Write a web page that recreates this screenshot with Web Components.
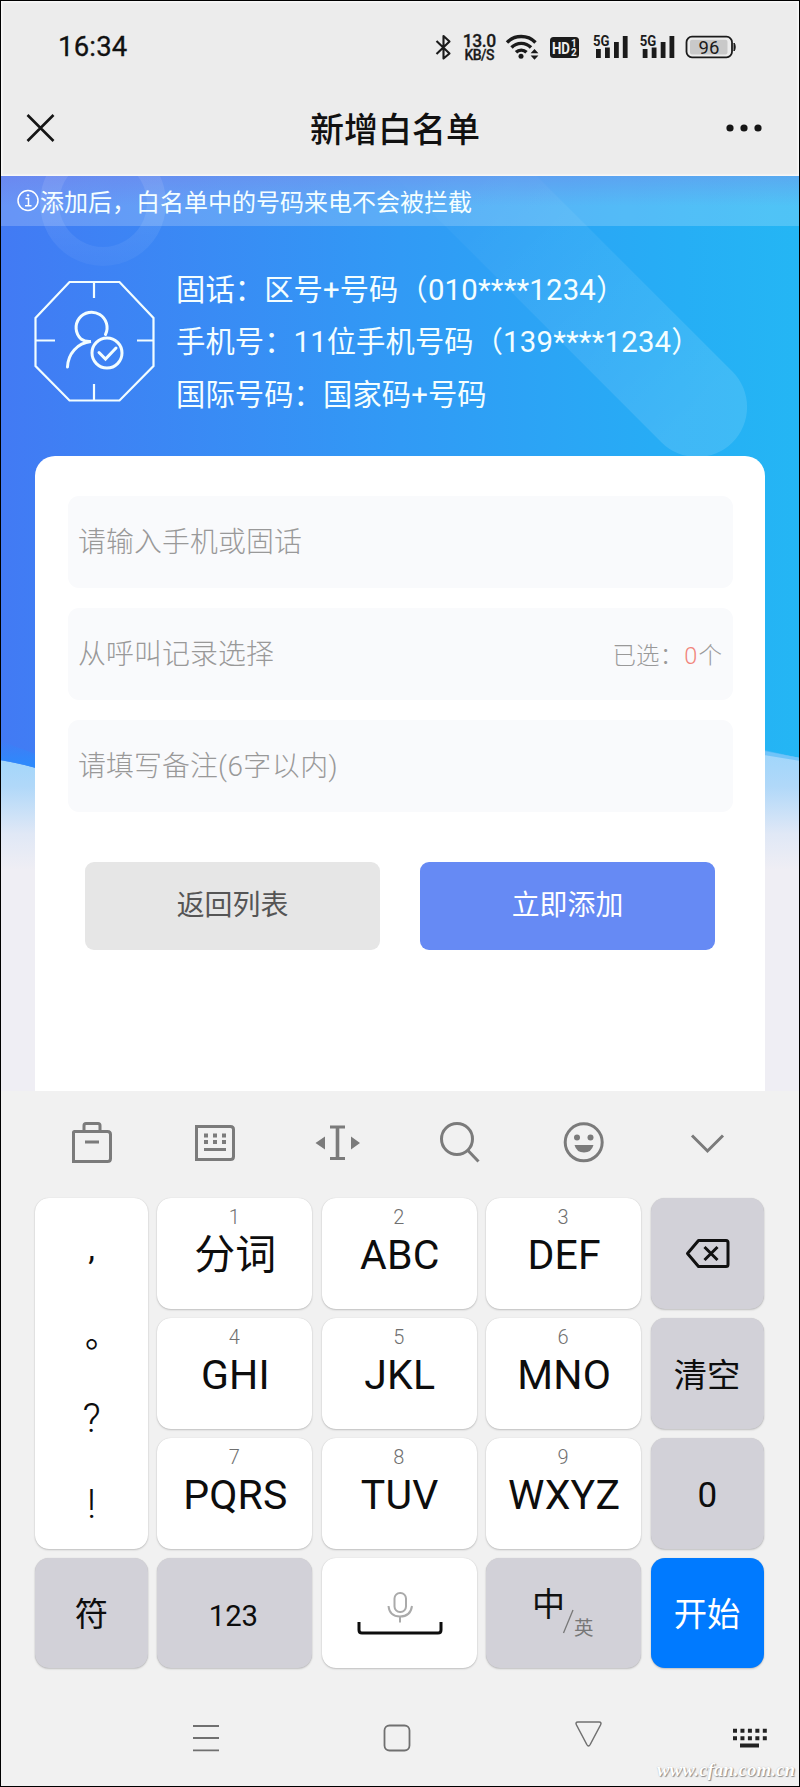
<!DOCTYPE html>
<html lang="zh-CN">
<head>
<meta charset="utf-8">
<title>新增白名单</title>
<style>
html,body{margin:0;padding:0}
body{width:800px;height:1787px;overflow:hidden;background:#f1f1f1;font-family:Roboto,"Noto Sans CJK SC",sans-serif;color:#111}
</style>
</head>
<body>
<whitelist-app></whitelist-app>
<script>
const define=(name,html)=>customElements.define(name,class extends HTMLElement{
  constructor(){super();this.attachShadow({mode:'open'}).innerHTML=html;}
});

define('status-bar',`
<style>
:host{display:flex;height:80px;box-sizing:border-box;padding:0 62px 0 57px;align-items:center;justify-content:space-between}
.time{font-size:27.500px;font-weight:400;-webkit-text-stroke:.3px;line-height:30px;padding-top:12px;letter-spacing:.2px}
svg{display:block;margin-top:12px}
text{font-family:Roboto,sans-serif}
</style>
<span class="time">16:34</span>
<svg width="302" height="32" viewBox="435 30 302 32" fill="#1b1b1b">
<path d="M436.500 40 449.500 52.500 443.500 57.500V35l6 5.500L436.500 53" fill="none" stroke="#1b1b1b" stroke-width="2.100" stroke-linejoin="round"/>
<text x="479.500" y="45.500" font-size="17.500" font-weight="500" stroke="#1b1b1b" stroke-width=".3" text-anchor="middle" textLength="33.500">13.0</text>
<text x="479.500" y="59" font-size="14" font-weight="500" stroke="#1b1b1b" stroke-width=".3" text-anchor="middle" textLength="30">KB/S</text>
<g fill="none" stroke="#1b1b1b" stroke-width="3.400"><path d="M507 41.500a20 20 0 0 1 28.500 0"/><path d="M511.500 46.500a13.500 13.500 0 0 1 19.500 0"/><path d="M516 51.300a7.500 7.500 0 0 1 10.500 0"/></g>
<circle cx="521" cy="55.300" r="2.500"/><path d="m534.500 48 3.900 4.300h-7.800zM534.500 58.700l3.900-4.300h-7.800z"/>
<rect x="550" y="36" width="29" height="21" rx="3.500"/>
<text x="552" y="52.500" font-size="16.500" font-weight="700" fill="#eee" textLength="18" lengthAdjust="spacingAndGlyphs">HD</text>
<text x="571" y="46" font-size="10" font-weight="700" fill="#eee">1</text><text x="571" y="55" font-size="10" font-weight="700" fill="#eee">2</text>
<g id="sig"><text x="593" y="44.800" font-size="15" font-weight="700" textLength="16.500" lengthAdjust="spacingAndGlyphs">5G</text>
<rect x="596" y="48" width="4.800" height="9"/><rect x="605" y="46.500" width="4.800" height="10.500"/><rect x="614" y="41" width="4.800" height="16"/><rect x="622.800" y="35" width="4.800" height="22"/></g>
<use href="#sig" x="46.700"/>
<rect x="686.500" y="35.700" width="45.500" height="20.600" rx="5.500" fill="none" stroke="#1b1b1b" stroke-width="1.800"/>
<rect x="690" y="38.700" width="37.500" height="14.800" rx="2" fill="#c9c9c9"/><path d="M734 42c1.600 1 1.600 7 0 8z" stroke="#1b1b1b"/>
<text x="709" y="52.800" font-size="18.500" text-anchor="middle" textLength="21">96</text>
</svg>`);

define('title-bar',`
<style>
:host{display:flex;height:95px;align-items:center;justify-content:space-between;padding:0 36px 0 25px;box-sizing:border-box}
h1{margin:0;font:500 34px/50px "Noto Sans CJK SC",sans-serif;padding:0 0 2px 9px}
</style>
<svg width="30" height="30" viewBox="0 0 30 30"><path d="m1.500 1 26 26m0-26-26 26" stroke="#151515" stroke-width="2.600" fill="none"/></svg>
<h1>新增白名单</h1>
<svg width="38" height="10" viewBox="0 0 38 10" fill="#151515"><circle cx="5" cy="4" r="3.600"/><circle cx="19" cy="4" r="3.600"/><circle cx="33" cy="4" r="3.600"/></svg>`);

define('notice-bar',`
<style>
:host{display:flex;height:50px;align-items:center;padding-left:15px;color:#f4feff;background:linear-gradient(rgba(115,105,225,.28),rgba(115,105,225,0) 60%),rgba(255,255,255,.2)}
span{font:400 24px/36px "Noto Sans CJK SC",sans-serif;margin-top:-1px}
</style>
<svg width="24" height="24" viewBox="0 0 24 24" fill="none" stroke="#fff" stroke-width="1.500"><circle cx="12" cy="11.500" r="10"/><path d="M9.500 9.500h3v7M9 16.700h6.500"/><circle cx="12" cy="6.300" r="1" fill="#fff" stroke-width=".6"/></svg>
<span><slot></slot></span>`);

define('tips-panel',`
<style>
:host{display:flex;padding:38px 0 0 33px;gap:21px;color:#f4feff;height:192px;box-sizing:border-box}
svg{margin-top:15.500px;flex:none}
.lines{display:grid;grid-auto-rows:52.300px;align-items:center;font-size:29.300px;letter-spacing:.1px;line-height:52px;white-space:nowrap;font-weight:400}
i{font-style:normal;letter-spacing:.22px}
</style>
<svg width="121" height="122" viewBox="0 0 121 122" fill="none" stroke="#f2fdff" stroke-width="2.200">
<path d="M35.500 2h50l34 36v48l-34 34.500h-50L1.500 86V38zM60 2v16M60 104v16.500M1.500 60.500H21M103 60.500h17"/>
<g stroke-width="3" stroke-linecap="round"><path d="M71.500 54.500A15.500 15.500 0 1 0 47 59q4 3 10 2.500C43 63 34 74 33.500 87"/><circle cx="73" cy="73" r="15"/><path d="m65 72.500 6.500 6.500 10.500-11"/></g></svg>
<div class="lines"><span>固话：区号+号码（<i>010****1234</i>）</span><span>手机号：11位手机号码（<i>139****1234</i>）</span><span>国际号码：国家码+号码</span></div>`);

define('form-field',`
<style>
:host{display:flex;height:92px;box-sizing:border-box;border-radius:11px;background:#f9fafc;align-items:center;justify-content:space-between;padding:1px 11px 0 10px;font-size:27.900px;letter-spacing:.1px;font-weight:300;color:#999;line-height:40px}
::slotted(em){font-style:normal;font-size:23.500px;padding-top:3px}
</style><span><slot></slot></span><slot name="extra"></slot>`);

define('form-button',`
<style>
:host{display:flex;height:88px;border-radius:9px;background:var(--bg,#e6e6e6);color:var(--fg,#555);align-items:center;justify-content:center;font-size:27.900px;line-height:40px}
</style><span><slot></slot></span>`);

define('form-card',`
<style>
:host{display:flex;flex-direction:column;margin:38px 34px 0;height:635px;box-sizing:border-box;padding:40px 32px 0 33px;background:#fff;border-radius:20px 20px 0 0;position:relative}
.fields{display:grid;gap:20px}
.actions{display:grid;grid-template-columns:295px 295px;gap:40px;margin:50px 0 0 17px}
.blue{--bg:#668af4;--fg:#fff}
b{font-weight:300;color:#f1857b;padding:0 1px}
</style>
<div class="fields"><form-field>请输入手机或固话</form-field>
<form-field>从呼叫记录选择<em slot="extra">已选：<b>0</b>个</em></form-field>
<form-field>请填写备注<span style="letter-spacing:.5px">(6字以内)</span></form-field></div>
<div class="actions"><form-button>返回列表</form-button><form-button class="blue">立即添加</form-button></div>`);

define('hero-backdrop',`
<style>:host{position:absolute;inset:0;display:block}svg{display:block}</style>
<svg width="798" height="915" viewBox="1 176 798 915">
<defs><linearGradient id="b" x1="0" x2="1" y1="0" y2="0"><stop offset="0" stop-color="#427af4"/><stop offset=".5" stop-color="#319af5"/><stop offset=".85" stop-color="#26aef5"/><stop offset="1" stop-color="#24b6f4"/></linearGradient>
<linearGradient id="f" x1="0" x2="0" y1="0" y2="1"><stop offset="0" stop-color="#9fd6fb"/><stop offset=".3" stop-color="#b0d8f9"/><stop offset=".7" stop-color="#e0e8f6"/><stop offset="1" stop-color="#efeef4"/></linearGradient>
<linearGradient id="s" gradientUnits="userSpaceOnUse" x1="440" y1="150" x2="697" y2="407"><stop offset="0" stop-color="#fff" stop-opacity=".01"/><stop offset="1" stop-color="#fff" stop-opacity=".12"/></linearGradient>
<linearGradient id="r" x1="0" x2="0" y1="0" y2="1"><stop offset="0" stop-color="#fff" stop-opacity=".16"/><stop offset="1" stop-color="#fff" stop-opacity=".04"/></linearGradient>
<linearGradient id="w" x1="0" x2="0" y1="0" y2="1"><stop offset="0" stop-color="#2b8bfd" stop-opacity="0"/><stop offset="1" stop-color="#2b8bfd"/></linearGradient></defs>
<path fill="#efeef4" d="M0 176h800v915H0z"/>
<path fill="url(#f)" d="M0 750h800v120H0z"/>
<path fill="url(#b)" d="M0 176h800v582l-36-7L36 768Q18 763 0 760z"/>
<path fill="url(#w)" d="M0 740q18 8 36 14v14Q18 763 0 760z"/>
<path fill="#5cbcf8" opacity=".7" d="M764 750l36 8v3l-36-6z"/>
<path d="M103 140a63 63 0 1 0 .1 0zM103 159a44 44 0 1 1-.1 0z" fill="url(#r)" fill-rule="evenodd"/>
<path d="M305.600 86.400 661.600 442.400A50 50 0 0 0 732.400 371.600L376.400 15.600z" fill="url(#s)"/>
</svg>`);

define('hero-area',`
<style>:host{display:block;position:relative;height:915px;overflow:hidden}notice-bar,tips-panel{position:relative}</style>
<hero-backdrop></hero-backdrop><notice-bar>添加后，白名单中的号码来电不会被拦截</notice-bar><tips-panel></tips-panel><form-card></form-card>`);

define('key-tools',`
<style>:host{display:flex;justify-content:space-between;padding:0 69px 0 68px;height:107px;box-sizing:border-box;align-items:flex-start}svg{display:block;margin-top:29px}</style>
<svg width="46" height="46" viewBox="69 1120 46 46" fill="none" stroke="#7b7b7b" stroke-width="3"><path d="M73.500 1132.500q0-1 1-1h33q3 0 3 3v24q0 3-3 3h-34zM84 1131v-5.500q0-2 2-2h12q2 0 2 2v5.500M85 1142h14"/></svg>
<svg width="46" height="46" viewBox="192 1120 46 46" fill="none" stroke="#7b7b7b" stroke-width="3"><path d="M196.500 1126.500h34q3 0 3 3v27q0 3-3 3h-34zM204 1149.500h22"/><path d="M204 1135.500h22M204 1142h22" stroke-width="4" stroke-dasharray="4 5"/></svg>
<svg width="46" height="46" viewBox="315 1120 46 46" fill="#7b7b7b"><path d="M330 1125.500h15v3h-5.700v28.500h5.700v3h-15v-3h5.700v-28.500H330zM315.500 1143l9.500-6.500v13zM360 1143l-9-6.500v13z"/></svg>
<svg width="46" height="46" viewBox="438.500 1120 46 46" fill="none" stroke="#7b7b7b" stroke-width="3"><circle cx="457.500" cy="1139" r="15.500"/><path d="m468 1150 11 11.500"/></svg>
<svg width="46" height="46" viewBox="561 1120 46 46" fill="none" stroke="#7b7b7b" stroke-width="3"><circle cx="583.700" cy="1142.300" r="18.500"/><g fill="#7b7b7b" stroke="none"><circle cx="577" cy="1137.500" r="3"/><circle cx="590.500" cy="1137.500" r="3"/><path d="M574.500 1145h19q-2 7.500-9.500 7.500t-9.500-7.500z"/></g></svg>
<svg width="46" height="46" viewBox="684 1120 46 46" fill="none" stroke="#7b7b7b" stroke-width="3"><path d="m692 1135.500 15.500 15.500 15.500-15.500"/></svg>`);

define('key-cap',`
<style>
:host{display:flex;flex-direction:column;align-items:center;box-sizing:border-box;border-radius:14px;background:#fff;box-shadow:0 1px 2px rgba(0,0,0,.2),0 0 1px rgba(0,0,0,.15);white-space:nowrap;color:#0d0d0d}
:host([tone=gray]){background:#d2d1d8;justify-content:center}
:host([tone=blue]){background:#007aff;color:#fff;justify-content:center}
:host([plain]){justify-content:center}
small{font-size:20px;line-height:22px;font-weight:300;color:#707070;margin:8px 1px 0 0}
:host([tone]) small,:host([plain]) small{display:none}
.l{font-size:var(--fs,41px);line-height:50px;padding:var(--dy,2px) 0 0 var(--dx,1px);letter-spacing:var(--ls,.2px)}
</style><small><slot name="hint"></slot></small><span class="l"><slot></slot></span>`);

define('punct-key',`
<style>
:host{display:grid;grid-row:1/4;grid-template-rows:85px 86px 86px 50px;align-content:start;justify-items:center;padding-top:25px;box-sizing:border-box;border-radius:14px;background:#fff;box-shadow:0 1px 2px rgba(0,0,0,.2),0 0 1px rgba(0,0,0,.15);font-size:40px;font-weight:400;color:#0d0d0d}
span{line-height:50px;height:50px}
.c{font-size:34px}.p{font-family:"Noto Sans CJK SC";font-size:34px;padding-left:21px}
.q{font-weight:300}
</style>
<span class="c">,</span><span class="p">。</span><span class="q">?</span><span class="q">!</span>`);

define('key-board',`
<style>
:host{display:grid;margin:0 35.500px 0 34px;grid-template-columns:113px 155px 155px 155px 113px;grid-template-rows:111px 111px 111px 109.500px;row-gap:9px;justify-content:space-between}
.zh{--fs:33.300px;--dy:4px;--dx:0px;--ls:0px}svg{display:block}
</style>
<punct-key></punct-key>
<key-cap><span slot="hint">1</span>分词</key-cap>
<key-cap><span slot="hint">2</span>ABC</key-cap>
<key-cap><span slot="hint">3</span>DEF</key-cap>
<key-cap tone="gray" style="--dy:0px"><svg width="46" height="32" viewBox="0 0 46 32" fill="none" stroke="#111" stroke-width="3"><path d="M2.500 15.500 13.500 2.500H41q2 0 2 2v22q0 2-2 2H13.500z" stroke-linejoin="round"/><path d="m19.500 9 13 13m0-13-13 13"/></svg></key-cap>
<key-cap><span slot="hint">4</span>GHI</key-cap>
<key-cap><span slot="hint">5</span>JKL</key-cap>
<key-cap><span slot="hint">6</span>MNO</key-cap>
<key-cap tone="gray" class="zh">清空</key-cap>
<key-cap><span slot="hint">7</span>PQRS</key-cap>
<key-cap><span slot="hint">8</span>TUV</key-cap>
<key-cap><span slot="hint">9</span>WXYZ</key-cap>
<key-cap tone="gray" style="--fs:35px;--dy:4px">0</key-cap>
<key-cap tone="gray" class="zh">符</key-cap>
<key-cap tone="gray" style="--fs:29.300px;--dy:6px;--dx:0px;--ls:0px"><span style="padding-right:3px">123</span></key-cap>
<key-cap plain style="--dy:0px"><svg width="88" height="50" viewBox="356 1588 88 50" fill="none"><path d="M359 1622v8q0 3 3 3h76q3 0 3-3v-8" stroke="#0d0d0d" stroke-width="3"/><g stroke="#aaa" stroke-width="2"><rect x="394.500" y="1593" width="11.500" height="19" rx="5.500"/><path d="M388.500 1606q1 10.500 11.500 10.500t12-10.500M400 1616.500v6"/></g></svg></key-cap>
<key-cap tone="gray" style="--dy:0px"><svg width="70" height="100" viewBox="529 1563 70 100"><text x="532" y="1616" font-size="33" fill="#111" font-family="Noto Sans CJK SC">中</text><path d="M563.500 1633 573 1610" stroke="#777" stroke-width="1.300"/><text x="574" y="1634.500" font-size="19.500" fill="#777" font-family="Noto Sans CJK SC">英</text></svg></key-cap>
<key-cap tone="blue" class="zh">开始</key-cap>`);

define('system-nav',`
<style>
:host{display:block;height:118px;position:relative}
svg{display:block}
.mark{position:absolute;right:4px;bottom:4px;font:italic 700 18.800px/24px "Liberation Serif",serif;color:#fff;letter-spacing:.1px;text-shadow:1px 1px 1px #8c8c8c,0 0 1px #b5b5b5}
</style>
<svg width="798" height="90" viewBox="1 1668 798 90" fill="none" stroke="#707070" stroke-width="1.800">
<path d="M193 1726h26M193 1738h26M193 1750.300h26"/><rect x="384.500" y="1725.500" width="25" height="25" rx="5"/><path d="M578 1722h21q3 0 1.500 3l-10.300 19.500q-1.700 3-3.400 0L576.500 1725q-1.500-3 1.500-3z" stroke-width="1.500"/>
<g stroke="#222"><path d="M733 1730.700h34M733 1738.200h34" stroke-width="4" stroke-dasharray="4 3.450"/><path d="M740 1745.500h19" stroke-width="4"/></g></svg>
<span class="mark">www.cfan.com.cn</span>`);

define('whitelist-app',`
<style>:host{display:block;box-sizing:border-box;width:800px;height:1787px;border:1px solid #000;background:#f1f1f1;overflow:hidden}
header{background:#ececec;box-shadow:inset 0 0 1px 1.500px #f8f8f8}</style>
<header><status-bar></status-bar><title-bar></title-bar></header>
<hero-area></hero-area><key-tools></key-tools><key-board></key-board><system-nav></system-nav>`);
</script>
</body>
</html>
